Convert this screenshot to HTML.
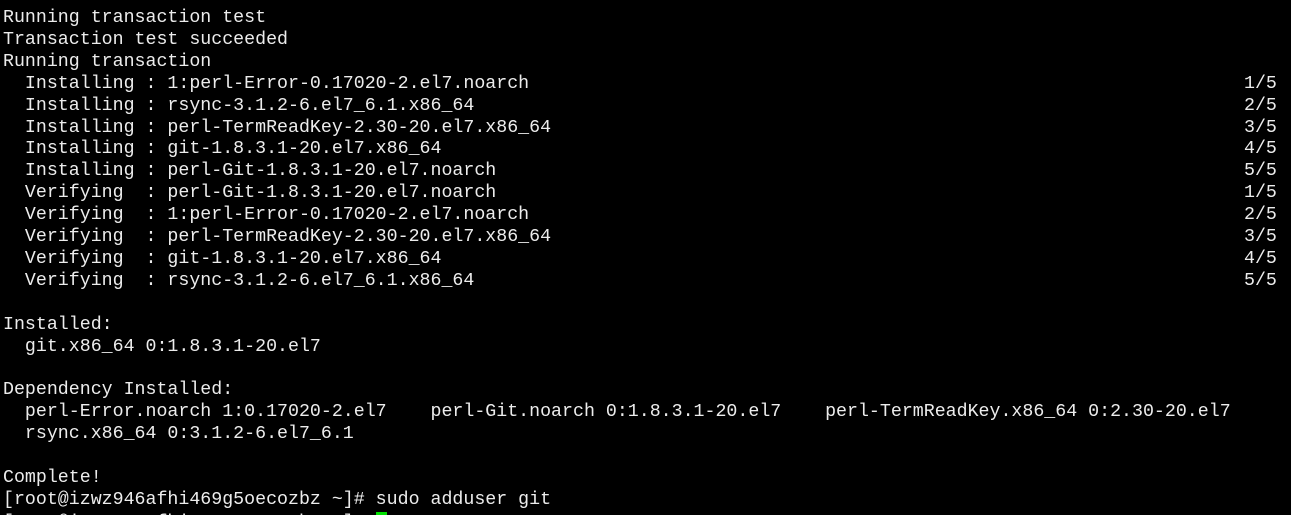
<!DOCTYPE html>
<html><head><meta charset="utf-8"><style>
html,body{margin:0;padding:0;background:#000;width:1291px;height:515px;overflow:hidden;position:relative}
pre{margin:0;position:absolute;left:3px;top:8px;font-family:"Liberation Mono",monospace;font-size:18.27px;line-height:21.9px;color:#ececec}
.r{position:absolute;left:1241px}
.c{display:inline-block;width:11px;height:18px;background:#00e000;vertical-align:-3px}
</style></head><body>
<pre>Running transaction test
Transaction test succeeded
Running transaction
  Installing : 1:perl-Error-0.17020-2.el7.noarch<span class="r">1/5</span>
  Installing : rsync-3.1.2-6.el7_6.1.x86_64<span class="r">2/5</span>
  Installing : perl-TermReadKey-2.30-20.el7.x86_64<span class="r">3/5</span>
  Installing : git-1.8.3.1-20.el7.x86_64<span class="r">4/5</span>
  Installing : perl-Git-1.8.3.1-20.el7.noarch<span class="r">5/5</span>
  Verifying  : perl-Git-1.8.3.1-20.el7.noarch<span class="r">1/5</span>
  Verifying  : 1:perl-Error-0.17020-2.el7.noarch<span class="r">2/5</span>
  Verifying  : perl-TermReadKey-2.30-20.el7.x86_64<span class="r">3/5</span>
  Verifying  : git-1.8.3.1-20.el7.x86_64<span class="r">4/5</span>
  Verifying  : rsync-3.1.2-6.el7_6.1.x86_64<span class="r">5/5</span>

Installed:
  git.x86_64 0:1.8.3.1-20.el7

Dependency Installed:
  perl-Error.noarch 1:0.17020-2.el7    perl-Git.noarch 0:1.8.3.1-20.el7    perl-TermReadKey.x86_64 0:2.30-20.el7
  rsync.x86_64 0:3.1.2-6.el7_6.1

Complete!
[root@izwz946afhi469g5oecozbz ~]# sudo adduser git
[root@izwz946afhi469g5oecozbz ~]# <span class="c"></span></pre>
</body></html>
